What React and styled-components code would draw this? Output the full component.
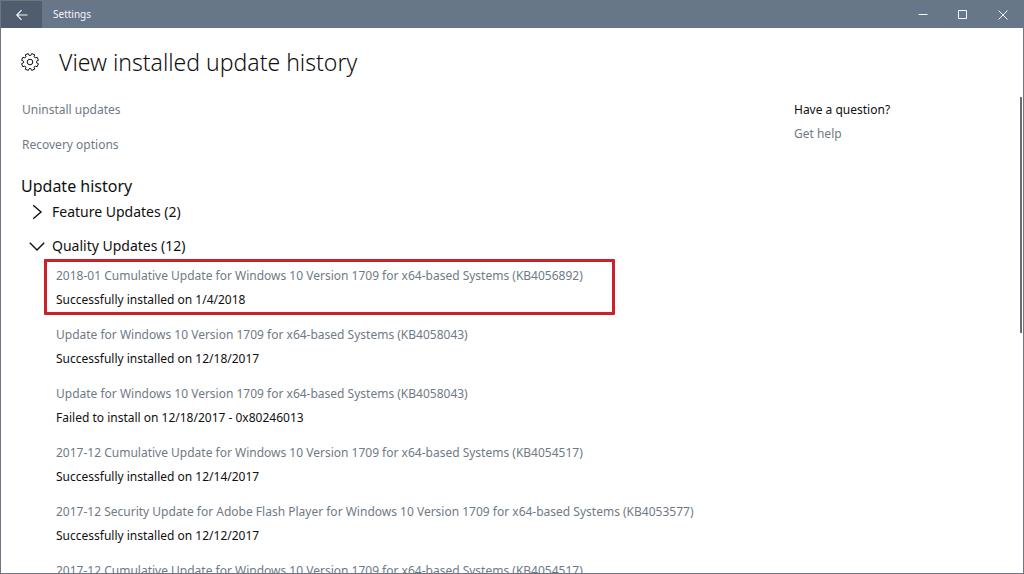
import React, { useState } from "react";
import styled, { createGlobalStyle } from "styled-components";

const GlobalStyle = createGlobalStyle`
  *, *::before, *::after { box-sizing: border-box; }
  body {
    margin: 0;
    background: #ffffff;
    color: #101010;
    font: 12px/24px "Noto Sans", "Segoe UI", sans-serif;
  }
  button { font: inherit; color: inherit; background: none; border: 0; padding: 0; cursor: pointer; }
  h1, h2, p, ul { margin: 0; padding: 0; font-weight: 400; }
  ul { list-style: none; }
  svg { display: block; flex: none; fill: none; stroke: currentColor; }
`;

const Window = styled.div`
  display: flex;
  flex-direction: column;
  height: 100vh;
  border: 1px solid #6d7784;
  overflow: hidden;
`;

const TitleBar = styled.header`
  display: flex;
  flex: none;
  height: 27px;
  color: #f4f7fa;
  background: #68768a;
`;

const BackButton = styled.button`
  display: grid;
  place-items: center;
  width: 41px;
  background: #4f5d6e;
`;

const WindowTitle = styled.span`
  flex: 1;
  padding-left: 11px;
  font-size: 10px;
  line-height: 26px;
`;

const WindowButton = styled.button`
  display: grid;
  place-items: center;
  width: 40px;
`;

const PageHeader = styled.div`
  display: flex;
  flex: none;
  align-items: center;
  gap: 19px;
  padding: 14px 19px 15px;
`;

const PageTitle = styled.h1`
  && { font-weight: 300; }
  font-size: 23px;
  line-height: 40px;
`;

const Scroller = styled.div`
  display: flex;
  flex: 1;
  min-height: 0;
  overflow: hidden;
`;

const Main = styled.main`
  flex: 1;
  min-width: 0;
  padding: 1px 20px 0;
`;

const Aside = styled.aside`
  width: 226px;
  padding-top: 1px;
`;

const ScrollThumb = styled.div`
  flex: none;
  width: 2px;
  height: 236px;
  margin-right: 1px;
  background: #6c6c6c;
`;

const Link = styled.a`
  color: #6f7a86;
  text-decoration: none;
  white-space: nowrap;
`;

const LinkList = styled.ul`
  display: grid;
  gap: 11px;
  margin-bottom: 18px;
  padding-left: 1px;
`;

const SectionTitle = styled.h2`
  font-size: 16px;
  line-height: 22px;
`;

const GroupToggle = styled.button`
  display: flex;
  align-items: center;
  gap: 7px;
  height: 28px;
  margin-bottom: ${(p) => (p.$open ? 0 : 6)}px;
  padding: 2px 0 0 8px;
  font-size: 14px;
`;

const UpdateList = styled.ul`
  display: flex;
  flex-direction: column;
  align-items: flex-start;
  gap: 3px;
  padding-left: 23px;
`;

const UpdateItem = styled.li`
  padding: 2px 29px 0 9px;
  border: 3px solid ${(p) => (p.$marked ? "#cb2229" : "transparent")};
  border-radius: 1px;
`;

const gearPath = (() => {
  const pts = [];
  for (let i = 0; i < 8; i++) {
    const c = (i * Math.PI) / 4 + Math.PI / 8;
    [[-0.27, 6.6], [-0.19, 8.6], [0.19, 8.6], [0.27, 6.6]].forEach(([d, r]) => {
      pts.push(`${(10 + r * Math.cos(c + d)).toFixed(2)} ${(10 + r * Math.sin(c + d)).toFixed(2)}`);
    });
  }
  return `M${pts.join("L")}Z`;
})();

const GearIcon = () => (
  <svg width="20" height="20" viewBox="0 0 20 20" strokeWidth="1" strokeLinejoin="round" aria-hidden="true">
    <path d={gearPath} />
    <circle cx="10" cy="10" r="2.8" />
  </svg>
);

const Chevron = ({ open }) => (
  <svg width="16" height="16" viewBox="0 0 16 16" strokeWidth="1.4" aria-hidden="true">
    <path d={open ? "M.8 4.8 8 12l7.2-7.2" : "M4.2 1.2 12 8l-7.8 6.8"} />
  </svg>
);

const qualityUpdates = [
  ["2018-01 Cumulative Update for Windows 10 Version 1709 for x64-based Systems (KB4056892)", "Successfully installed on 1/4/2018", true],
  ["Update for Windows 10 Version 1709 for x64-based Systems (KB4058043)", "Successfully installed on 12/18/2017"],
  ["Update for Windows 10 Version 1709 for x64-based Systems (KB4058043)", "Failed to install on 12/18/2017 - 0x80246013"],
  ["2017-12 Cumulative Update for Windows 10 Version 1709 for x64-based Systems (KB4054517)", "Successfully installed on 12/14/2017"],
  ["2017-12 Security Update for Adobe Flash Player for Windows 10 Version 1709 for x64-based Systems (KB4053577)", "Successfully installed on 12/12/2017"],
  ["2017-12 Cumulative Update for Windows 10 Version 1709 for x64-based Systems (KB4054517)"],
];

function UpdateGroup({ title, updates = [], initiallyOpen = false }) {
  const [open, setOpen] = useState(initiallyOpen);
  return (
    <section>
      <GroupToggle type="button" $open={open} aria-expanded={open} onClick={() => setOpen(!open)}>
        <Chevron open={open} />
        {title}
      </GroupToggle>
      {open && (
        <UpdateList>
          {updates.map(([name, status, marked], i) => (
            <UpdateItem key={i} $marked={marked}>
              <Link href="#details">{name}</Link>
              {status && <p>{status}</p>}
            </UpdateItem>
          ))}
        </UpdateList>
      )}
    </section>
  );
}

export default function App() {
  return (
    <Window>
      <GlobalStyle />
      <TitleBar>
        <BackButton type="button" aria-label="Back">
          <svg width="12" height="12" viewBox="0 0 12 12" strokeWidth="1.2">
            <path d="M11.5 6H1M5.5 1.2.8 6l4.7 4.8" />
          </svg>
        </BackButton>
        <WindowTitle>Settings</WindowTitle>
        <WindowButton type="button" aria-label="Minimize">
          <svg width="10" height="10" viewBox="0 0 10 10"><path d="M.5 4.5h9" /></svg>
        </WindowButton>
        <WindowButton type="button" aria-label="Maximize">
          <svg width="10" height="10" viewBox="0 0 10 10"><path d="M.5.5h8v8h-8z" /></svg>
        </WindowButton>
        <WindowButton type="button" aria-label="Close">
          <svg width="10" height="10" viewBox="0 0 10 10"><path d="M.5.5l9 9M9.5.5l-9 9" /></svg>
        </WindowButton>
      </TitleBar>
      <PageHeader>
        <GearIcon />
        <PageTitle>View installed update history</PageTitle>
      </PageHeader>
      <Scroller>
        <Main>
          <LinkList>
            <li><Link href="#uninstall">Uninstall updates</Link></li>
            <li><Link href="#recovery">Recovery options</Link></li>
          </LinkList>
          <SectionTitle>Update history</SectionTitle>
          <UpdateGroup title="Feature Updates (2)" />
          <UpdateGroup title="Quality Updates (12)" updates={qualityUpdates} initiallyOpen />
        </Main>
        <Aside>
          <p>Have a question?</p>
          <Link href="#help">Get help</Link>
        </Aside>
        <ScrollThumb />
      </Scroller>
    </Window>
  );
}
